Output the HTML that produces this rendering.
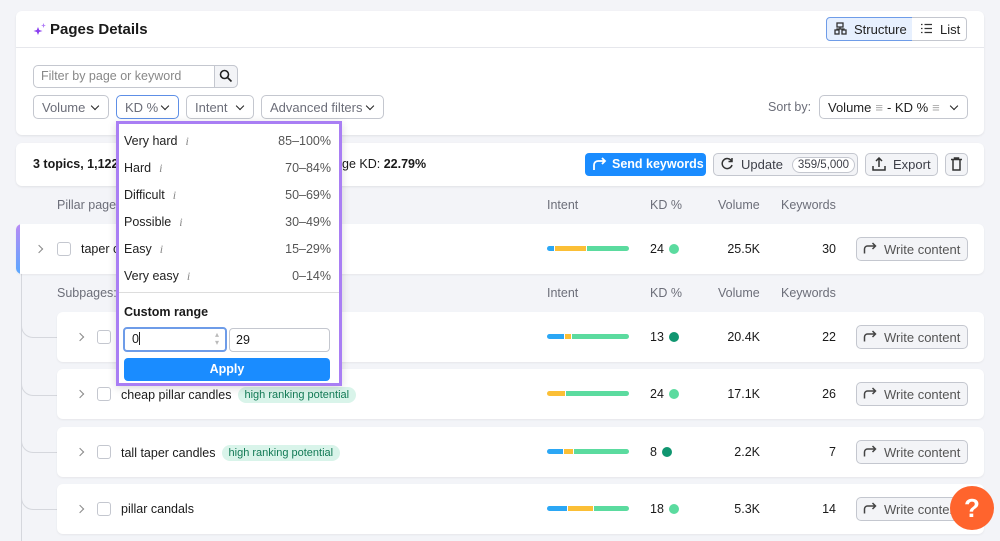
<!DOCTYPE html>
<html><head><meta charset="utf-8"><style>
*{box-sizing:border-box;margin:0;padding:0}
body{width:1000px;height:541px;overflow:hidden;background:#f3f4f8;font-family:"Liberation Sans",sans-serif;font-size:13px;color:#1a1a1a;position:relative}
.abs{position:absolute}
.card{position:absolute;background:#fff;border-radius:6px;box-shadow:0 1px 2px rgba(0,0,0,.08)}
.btn{position:absolute;border:1px solid #c4c7cf;border-radius:5px;background:#fff;color:#6c6e79;display:flex;align-items:center;padding-left:8px;font-size:13px}
.gbtn{position:absolute;border:1px solid #c4c7cf;border-radius:5px;background:#f3f4f7;color:#3d3f48;display:flex;align-items:center;font-size:13px}
.chev{position:absolute;right:10px;top:7px;width:6px;height:6px;border-right:1.7px solid #222;border-bottom:1.7px solid #222;transform:rotate(45deg)}
.th{position:absolute;color:#6c6e79;font-size:12.5px}
.row{position:absolute;left:57px;width:927px;height:50px;background:#fff;border-radius:6px;box-shadow:0 1px 2px rgba(0,0,0,.06)}
.rchev{position:absolute;width:6px;height:6px;border-right:1.5px solid #888;border-top:1.5px solid #888;transform:rotate(45deg)}
.cb{position:absolute;width:14px;height:14px;border:1px solid #c4c7cf;border-radius:3px;background:#fff}
.bar{position:absolute;left:547px;width:82px;height:5px;border-radius:3px;overflow:hidden;display:flex}
.bar i{display:block;height:100%;border-right:1px solid #fff}
.dot{display:inline-block;width:10px;height:10px;border-radius:50%;margin-left:5px;vertical-align:-1px}
.num{position:absolute;font-size:12.5px;text-align:right}
.wc{position:absolute;left:856px;width:112px;height:24px;color:#555}
.tag{display:inline-block;background:#d9f4ea;color:#127a55;font-size:11px;border-radius:9px;padding:2px 7px;margin-left:6px;vertical-align:1px}
.dd{position:absolute;left:116px;top:121px;width:226px;height:265px;background:#fff;border:3px solid #a97ef4;box-shadow:0 2px 8px rgba(0,0,0,.15)}
.it{position:absolute;left:5px;width:207px;font-size:12.5px;color:#222}
.it b{font-weight:normal;color:#888;font-family:"Liberation Serif",serif;font-style:italic;margin-left:8px;font-size:12px}
.it span{position:absolute;right:0;color:#555}
</style></head><body>

<div class="card" style="left:16px;top:11px;width:968px;height:124px"></div>
<div class="abs" style="left:16px;top:47px;width:968px;height:1px;background:#e6e7ec"></div>
<svg class="abs" style="left:33px;top:23px" width="14" height="13" viewBox="0 0 14 13"><path d="M5 4 L6.2 7 L9.5 8 L6.2 9 L5 12 L3.8 9 L0.5 8 L3.8 7Z" fill="#8a3ef0"/><path d="M10.5 0 L11.2 2 L13 2.5 L11.2 3 L10.5 5 L9.8 3 L8 2.5 L9.8 2Z" fill="#b07cf7"/></svg>
<div class="abs" style="left:50px;top:21px;font-size:15px;font-weight:bold">Pages Details</div>
<div class="abs" style="left:826px;top:17px;width:87px;height:24px;border:1px solid #6e9ce8;background:#e7f0fe;border-radius:4px 0 0 4px;font-size:13px;color:#222;padding:4px 0 0 27px">Structure</div>
<svg class="abs" style="left:834px;top:22px" width="13" height="13" viewBox="0 0 13 13" fill="none" stroke="#333" stroke-width="1.3"><rect x="3" y="1" width="6" height="4"/><rect x="1" y="8" width="4" height="4"/><rect x="8" y="8" width="4" height="4"/><path d="M6 5v2M3 8V7h7v1"/></svg>
<div class="abs" style="left:912px;top:17px;width:55px;height:24px;border:1px solid #c4c7cf;border-left:none;background:#fff;border-radius:0 4px 4px 0;font-size:13px;color:#222;padding:4px 0 0 28px">List</div>
<svg class="abs" style="left:920px;top:23px" width="13" height="11" viewBox="0 0 13 11" stroke="#333" stroke-width="1.3"><path d="M1 1.5h1.5M1 5.5h1.5M1 9.5h1.5M4.5 1.5H12M4.5 5.5H12M4.5 9.5H12"/></svg>

<div class="abs" style="left:33px;top:65px;width:205px;height:23px;border:1px solid #c4c7cf;border-radius:5px;background:#fff"></div>
<div class="abs" style="left:41px;top:69px;color:#888;font-size:12.5px">Filter by page or keyword</div>
<div class="abs" style="left:214px;top:65px;width:24px;height:23px;border:1px solid #c4c7cf;border-radius:0 5px 5px 0;background:#f3f4f7"></div>
<svg class="abs" style="left:219px;top:69px" width="14" height="14" viewBox="0 0 14 14" fill="none" stroke="#222" stroke-width="1.6"><circle cx="5.5" cy="5.5" r="4"/><path d="M8.5 8.5l4 4"/></svg>

<div class="btn" style="left:33px;top:95px;width:76px;height:24px">Volume<i class="chev"></i></div>
<div class="btn" style="left:116px;top:95px;width:63px;height:24px;border-color:#5e8fe6">KD %<i class="chev"></i></div>
<div class="btn" style="left:186px;top:95px;width:68px;height:24px">Intent<i class="chev"></i></div>
<div class="btn" style="left:261px;top:95px;width:123px;height:24px">Advanced filters<i class="chev"></i></div>
<div class="abs" style="left:768px;top:100px;color:#6c6e79;font-size:12.5px">Sort by:</div>
<div class="btn" style="left:819px;top:95px;width:149px;height:24px;color:#222">Volume <span style="color:#aaa;margin:0 4px">≡</span> - KD % <span style="color:#aaa;margin-left:4px">≡</span><i class="chev"></i></div>

<div class="card" style="left:16px;top:143px;width:968px;height:43px"></div>
<div class="abs" style="left:33px;top:157px;font-weight:bold;font-size:12.5px">3 topics, 1,122</div>
<div class="abs" style="left:342px;top:157px;font-size:12.5px">ge KD: <b>22.79%</b></div>
<div class="abs" style="left:585px;top:153px;width:121px;height:23px;background:#1a8cff;border-radius:4px;color:#fff;font-weight:bold;font-size:12.5px;padding:4px 0 0 27px">Send keywords</div>
<svg class="abs" style="left:592px;top:157px" width="15" height="14" viewBox="0 0 15 14" fill="none" stroke="#fff" stroke-width="1.8"><path d="M2 13V8a4 4 0 0 1 4-4h7M10 1l3 3-3 3"/></svg>
<div class="gbtn" style="left:713px;top:153px;width:145px;height:23px;padding-left:27px">Update <span style="margin-left:9px;border:1px solid #c4c7cf;background:#fff;border-radius:9px;font-size:11.5px;padding:1px 5px">359/5,000</span></div>
<svg class="abs" style="left:720px;top:157px" width="14" height="14" viewBox="0 0 14 14" fill="none" stroke="#333" stroke-width="1.5"><path d="M11.5 4A5 5 0 1 0 12 8"/><path d="M12 1v3.5H8.5"/></svg>
<div class="gbtn" style="left:865px;top:153px;width:73px;height:23px;padding-left:27px">Export</div>
<svg class="abs" style="left:872px;top:157px" width="14" height="14" viewBox="0 0 14 14" fill="none" stroke="#333" stroke-width="1.5"><path d="M1 9v4h12V9M7 10V1M4 4l3-3 3 3"/></svg>
<div class="gbtn" style="left:945px;top:153px;width:23px;height:23px"></div>
<svg class="abs" style="left:950px;top:157px" width="13" height="14" viewBox="0 0 13 14" fill="none" stroke="#333" stroke-width="1.5"><path d="M1 2.5h11M4.5 2.5V1h4v1.5M3 2.5V13h7V2.5"/></svg>

<div class="th" style="left:57px;top:198px">Pillar page</div>
<div class="th" style="left:547px;top:198px">Intent</div>
<div class="th" style="left:650px;top:198px">KD %</div>
<div class="th" style="left:718px;top:198px">Volume</div>
<div class="th" style="left:781px;top:198px">Keywords</div>

<div class="abs" style="left:21px;top:273px;width:1px;height:268px;background:#d5d7dd"></div>
<div class="abs" style="left:21px;top:318px;width:36px;height:20px;border-left:1px solid #d5d7dd;border-bottom:1px solid #d5d7dd;border-radius:0 0 0 12px"></div>
<div class="abs" style="left:21px;top:376px;width:36px;height:20px;border-left:1px solid #d5d7dd;border-bottom:1px solid #d5d7dd;border-radius:0 0 0 12px"></div>
<div class="abs" style="left:21px;top:433px;width:36px;height:20px;border-left:1px solid #d5d7dd;border-bottom:1px solid #d5d7dd;border-radius:0 0 0 12px"></div>
<div class="abs" style="left:21px;top:490px;width:36px;height:20px;border-left:1px solid #d5d7dd;border-bottom:1px solid #d5d7dd;border-radius:0 0 0 12px"></div>

<div class="row" style="left:16px;width:968px;top:224px;overflow:hidden"><div style="position:absolute;left:0;top:0;width:4px;height:50px;background:linear-gradient(#b88af5,#5aa8ff)"></div></div>
<i class="rchev" style="left:36px;top:246px"></i><i class="cb" style="left:57px;top:242px"></i>
<div class="abs" style="left:81px;top:242px;font-size:12.5px">taper c</div>
<div class="bar" style="top:246px"><i style="width:8px;background:#2ba7f5"></i><i style="width:32px;background:#fbbf36"></i><i style="flex:1;background:#5bdb9f;border:none"></i></div>
<div class="num" style="left:650px;top:242px">24<span class="dot" style="background:#5bdb9f"></span></div>
<div class="num" style="left:700px;width:60px;top:242px">25.5K</div>
<div class="num" style="left:780px;width:56px;top:242px">30</div>
<div class="gbtn wc" style="top:237px;padding-left:27px">Write content</div>

<div class="th" style="left:57px;top:286px">Subpages:</div>
<div class="th" style="left:547px;top:286px">Intent</div>
<div class="th" style="left:650px;top:286px">KD %</div>
<div class="th" style="left:718px;top:286px">Volume</div>
<div class="th" style="left:781px;top:286px">Keywords</div>

<div class="row" style="top:312px"></div>
<div class="row" style="top:369px"></div>
<div class="row" style="top:427px"></div>
<div class="row" style="top:484px"></div>

<i class="rchev" style="left:77px;top:334px"></i><i class="cb" style="left:97px;top:330px"></i>
<div class="bar" style="top:334px"><i style="width:18px;background:#2ba7f5"></i><i style="width:7px;background:#fbbf36"></i><i style="flex:1;background:#5bdb9f;border:none"></i></div>
<div class="num" style="left:650px;top:330px">13<span class="dot" style="background:#109670"></span></div>
<div class="num" style="left:700px;width:60px;top:330px">20.4K</div>
<div class="num" style="left:780px;width:56px;top:330px">22</div>
<div class="gbtn wc" style="top:325px;padding-left:27px">Write content</div>

<i class="rchev" style="left:77px;top:391px"></i><i class="cb" style="left:97px;top:387px"></i>
<div class="abs" style="left:121px;top:387px;font-size:12.5px">cheap pillar candles<span class="tag">high ranking potential</span></div>
<div class="bar" style="top:391px"><i style="width:19px;background:#fbbf36"></i><i style="flex:1;background:#5bdb9f;border:none"></i></div>
<div class="num" style="left:650px;top:387px">24<span class="dot" style="background:#5bdb9f"></span></div>
<div class="num" style="left:700px;width:60px;top:387px">17.1K</div>
<div class="num" style="left:780px;width:56px;top:387px">26</div>
<div class="gbtn wc" style="top:382px;padding-left:27px">Write content</div>

<i class="rchev" style="left:77px;top:449px"></i><i class="cb" style="left:97px;top:445px"></i>
<div class="abs" style="left:121px;top:445px;font-size:12.5px">tall taper candles<span class="tag">high ranking potential</span></div>
<div class="bar" style="top:449px"><i style="width:17px;background:#2ba7f5"></i><i style="width:10px;background:#fbbf36"></i><i style="flex:1;background:#5bdb9f;border:none"></i></div>
<div class="num" style="left:650px;top:445px">8<span class="dot" style="background:#109670"></span></div>
<div class="num" style="left:700px;width:60px;top:445px">2.2K</div>
<div class="num" style="left:780px;width:56px;top:445px">7</div>
<div class="gbtn wc" style="top:440px;padding-left:27px">Write content</div>

<i class="rchev" style="left:77px;top:506px"></i><i class="cb" style="left:97px;top:502px"></i>
<div class="abs" style="left:121px;top:502px;font-size:12.5px">pillar candals</div>
<div class="bar" style="top:506px"><i style="width:21px;background:#2ba7f5"></i><i style="width:26px;background:#fbbf36"></i><i style="flex:1;background:#5bdb9f;border:none"></i></div>
<div class="num" style="left:650px;top:502px">18<span class="dot" style="background:#5bdb9f"></span></div>
<div class="num" style="left:700px;width:60px;top:502px">5.3K</div>
<div class="num" style="left:780px;width:56px;top:502px">14</div>
<div class="gbtn wc" style="top:497px;padding-left:27px;overflow:hidden;white-space:nowrap">Write content</div>

<svg class="abs" style="left:863px;top:242px" width="14" height="12" viewBox="0 0 14 12" fill="none" stroke="#444" stroke-width="1.5"><path d="M1.5 11.5V7a3 3 0 0 1 3-3h8M9.5 1l3 3-3 3"/></svg>
<svg class="abs" style="left:863px;top:330px" width="14" height="12" viewBox="0 0 14 12" fill="none" stroke="#444" stroke-width="1.5"><path d="M1.5 11.5V7a3 3 0 0 1 3-3h8M9.5 1l3 3-3 3"/></svg>
<svg class="abs" style="left:863px;top:387px" width="14" height="12" viewBox="0 0 14 12" fill="none" stroke="#444" stroke-width="1.5"><path d="M1.5 11.5V7a3 3 0 0 1 3-3h8M9.5 1l3 3-3 3"/></svg>
<svg class="abs" style="left:863px;top:445px" width="14" height="12" viewBox="0 0 14 12" fill="none" stroke="#444" stroke-width="1.5"><path d="M1.5 11.5V7a3 3 0 0 1 3-3h8M9.5 1l3 3-3 3"/></svg>
<svg class="abs" style="left:863px;top:502px" width="14" height="12" viewBox="0 0 14 12" fill="none" stroke="#444" stroke-width="1.5"><path d="M1.5 11.5V7a3 3 0 0 1 3-3h8M9.5 1l3 3-3 3"/></svg>

<div class="abs" style="left:950px;top:486px;width:44px;height:44px;border-radius:50%;background:#ff642d;color:#fff;font-size:26px;font-weight:bold;text-align:center;line-height:44px">?</div>

<div class="dd">
<div class="it" style="top:10px">Very hard<b>i</b><span>85–100%</span></div>
<div class="it" style="top:37px">Hard<b>i</b><span>70–84%</span></div>
<div class="it" style="top:64px">Difficult<b>i</b><span>50–69%</span></div>
<div class="it" style="top:91px">Possible<b>i</b><span>30–49%</span></div>
<div class="it" style="top:118px">Easy<b>i</b><span>15–29%</span></div>
<div class="it" style="top:145px">Very easy<b>i</b><span>0–14%</span></div>
<div style="position:absolute;left:0;top:168px;width:220px;height:1px;background:#ddd"></div>
<div style="position:absolute;left:5px;top:181px;font-weight:bold;font-size:12.5px">Custom range</div>
<div style="position:absolute;left:4px;top:203px;width:104px;height:25px;border:2px solid #6e9ce8;border-radius:4px;padding:3px 0 0 7px;font-size:12.5px">0<span style="display:inline-block;width:1px;height:13px;background:#222;vertical-align:-2px"></span><span style="position:absolute;right:6px;top:2px;color:#bbb;font-size:8px;line-height:8px">▴<br>▾</span></div>
<div style="position:absolute;left:110px;top:204px;width:101px;height:24px;border:1px solid #c4c7cf;border-radius:4px;padding:4px 0 0 6px;font-size:12.5px">29</div>
<div style="position:absolute;left:5px;top:234px;width:206px;height:23px;background:#1a8cff;border-radius:4px;color:#fff;font-weight:bold;text-align:center;line-height:23px;font-size:12.5px">Apply</div>
</div>
</body></html>
